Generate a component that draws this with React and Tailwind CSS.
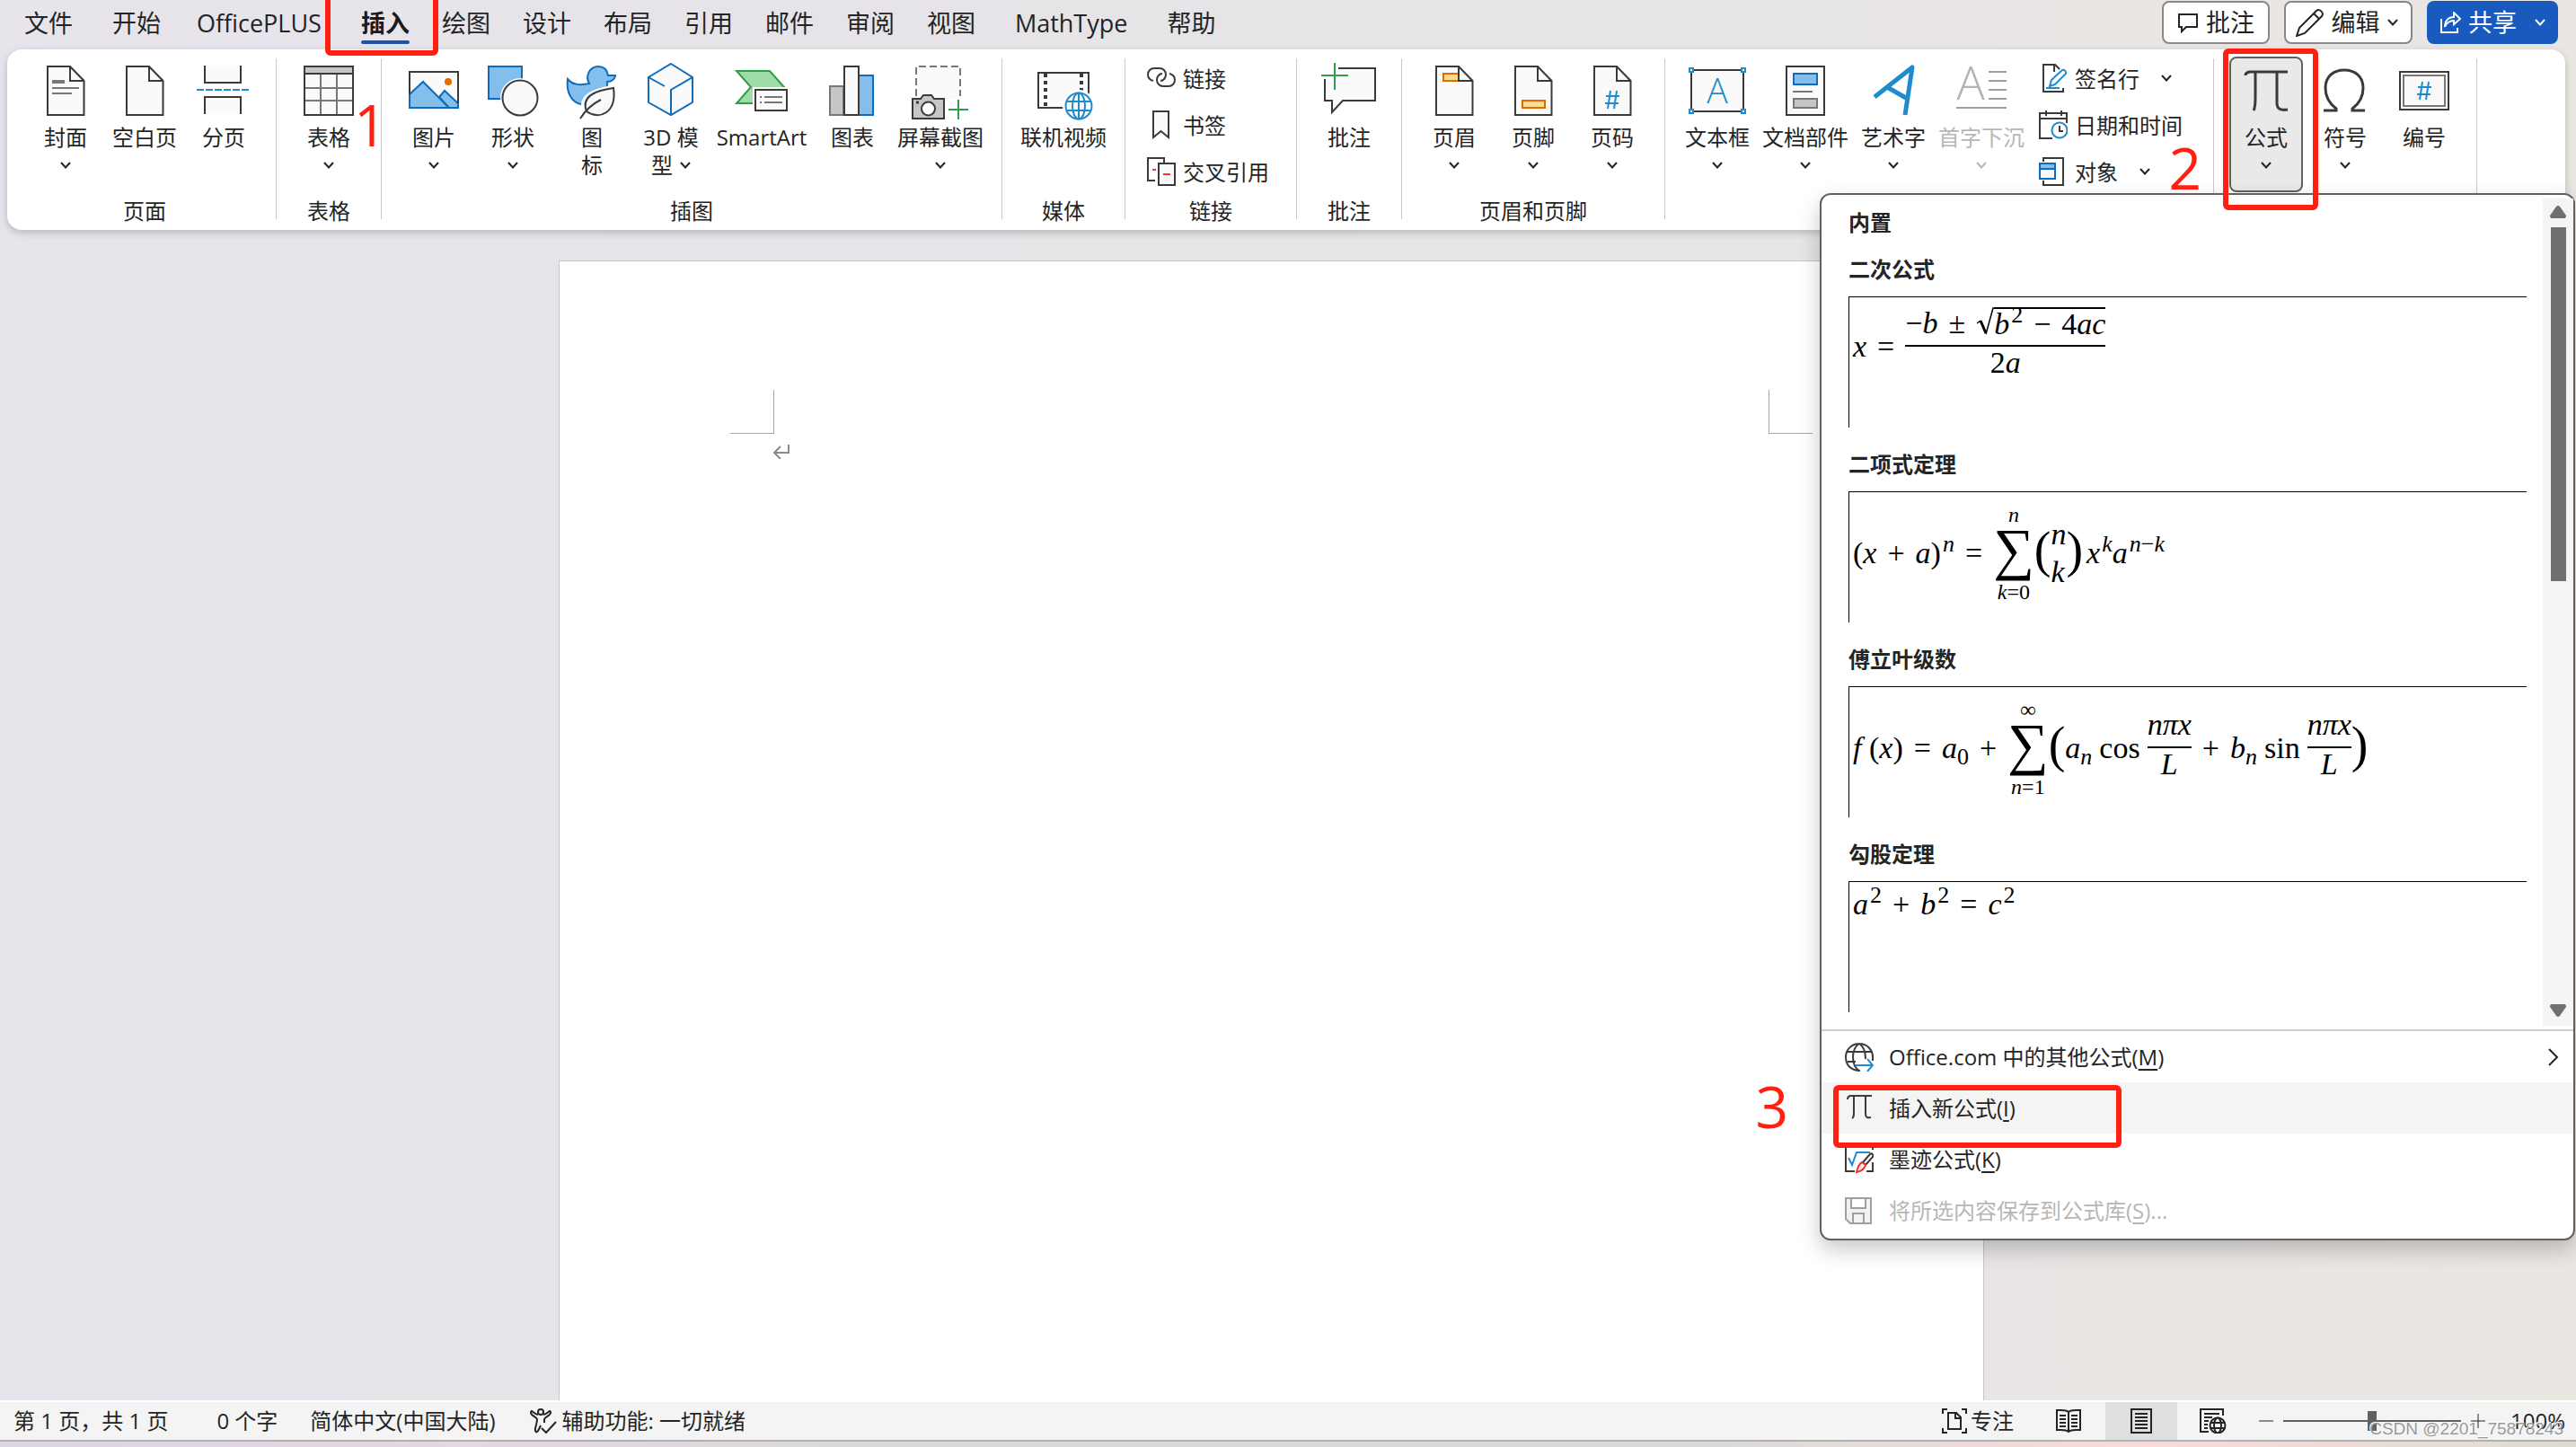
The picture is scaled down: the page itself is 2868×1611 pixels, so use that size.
import React from "react";

const DARK = "#3b3a39";
const BLUE = "#1e8bcd";
const DEEP = "#0f6cbd";
const SKY = "#83beec";
const GREEN = "#2f9e4f";

function Icon({ children }) {
  return (
    <svg aria-hidden="true" className="h-16 w-16 shrink-0 overflow-visible" viewBox="0 0 64 64" fill="none" stroke={DARK} strokeWidth="2">
      {children}
    </svg>
  );
}

function SmallIcon({ children }) {
  return (
    <svg aria-hidden="true" className="h-8 w-8 shrink-0" viewBox="0 0 32 32" fill="none" stroke={DARK} strokeWidth="2">
      {children}
    </svg>
  );
}

function Chevron({ className = "" }) {
  return (
    <svg aria-hidden="true" className={`h-2 w-3 shrink-0 ${className}`} viewBox="0 0 12 8" fill="none" stroke="currentColor" strokeWidth="2">
      <path d="M1 1L6 6.5L11 1" />
    </svg>
  );
}

const Sheet = () => (
  <>
    <path d="M12 4H37L52.5 20V58H12Z" fill="#fafafa" />
    <path d="M37 4V20H52.5" />
  </>
);

const Hash = ({ x, y }) => (
  <path d={`M${x - 2} ${y - 10}L${x - 5} ${y + 10}M${x + 5} ${y - 10}L${x + 2} ${y + 10}M${x - 7} ${y - 4}H${x + 8}M${x - 8} ${y + 4}H${x + 7}`} stroke={BLUE} />
);

const art = {
  cover: (
    <>
      <Sheet />
      <path d="M17 21H31" strokeWidth="4" stroke="#797775" />
      <path d="M17 28H47M17 34H39" stroke="#797775" />
    </>
  ),
  blank: <Sheet />,
  pageBreak: (
    <>
      <path d="M11 3V22H51V3M11 57V38H51V57" fill="#fafafa" />
      <path d="M2 30H60" stroke={BLUE} strokeDasharray="8 2" />
    </>
  ),
  table: (
    <>
      <path d="M5 4H59V58H5Z" fill="#fafafa" />
      <path d="M6 5H58V12H6Z" fill="#c8c6c4" stroke="none" />
      <path d="M5 28H59M5 42H59M23 12V58M41 12V58" stroke="#797775" />
      <path d="M5 4H59V58H5ZM5 12H59" />
    </>
  ),
  picture: (
    <>
      <path d="M5 10H59V50H5Z" fill="#fafafa" />
      <path d="M5 35L20 21L49 50H5Z" fill={SKY} stroke={DEEP} />
      <path d="M38 38L44 31L59 45V50H49Z" fill={SKY} stroke={DEEP} />
      <circle cx="48" cy="21" r="4" fill="#e06c00" stroke="none" />
      <path d="M5 35V10H59V45" />
      <path d="M5 35V50H59V45" stroke={DEEP} />
    </>
  ),
  shapes: (
    <>
      <path d="M5 4H42V40H5Z" fill={SKY} stroke={DEEP} />
      <circle cx="40" cy="39" r="22" fill="#fff" stroke="none" />
      <circle cx="40" cy="39" r="19.5" fill="#fafafa" />
    </>
  ),
  duck: (
    <>
      <path d="M5 18C11 25 19 25 29 23C24 14 30 4 39 4C46 4 49 8 50 14H58C58 18 54 21 49 21C50 26 48 30 46 34C40 46 28 48 20 46C9 44 3 32 5 18Z" fill={SKY} stroke={DEEP} />
      <path d="M55 25C35 28 20 34 20 48L18 62C40 66 60 60 59 40Z" fill="#fff" stroke="none" />
      <path d="M56 28C34 31 20 38 26 54C40 64 60 56 56 28Z" fill="#fafafa" />
      <path d="M42 41C32 46 24 54 19 62" />
    </>
  ),
  cube: (
    <>
      <path d="M32 1L56 16V44L32 58L7 44V16Z" fill="#fafafa" stroke={DEEP} />
      <path d="M56 16L32 30V58M7 16L25 26" stroke={DEEP} />
    </>
  ),
  smart: (
    <>
      <path d="M4 9H41L57 27L50 45H4L20 27Z" fill="#a0dca8" stroke={GREEN} />
      <path d="M22 27H63V56H22Z" fill="#fff" stroke="none" />
      <path d="M25 30H60V53H25Z" fill="#fafafa" />
      <path d="M30 38H32M35 38H55M30 44H32M35 44H55" stroke="#797775" />
    </>
  ),
  chart: (
    <>
      <path d="M7 26H22V58H7Z" fill="#c8c6c4" stroke="#797775" />
      <path d="M39 14H55V58H39Z" fill={SKY} stroke={DEEP} />
      <path d="M23 4H39V58H23Z" fill="#fafafa" />
    </>
  ),
  screenshot: (
    <>
      <path d="M5 4H54V40H5Z" fill="#fafafa" stroke="none" />
      <path d="M5 37V4H54V37" stroke="#797775" strokeDasharray="8 4" />
      <path d="M1 40H10L13 36H22L25 40H36V62H1Z" fill="#c8c6c4" />
      <circle cx="18.500" cy="51" r="7.500" fill="#fff" />
      <path d="M5 44H8" strokeWidth="3" />
      <path d="M52 41V63M41 52H63" stroke={GREEN} />
    </>
  ),
  video: (
    <>
      <path d="M4 11H60V50H4Z" fill="#fafafa" />
      <path d="M12 12V50M52 12V34" strokeWidth="4" strokeDasharray="4 4" />
      <circle cx="49" cy="48" r="18" fill="#fff" stroke="none" />
      <g stroke={BLUE}>
        <circle cx="49" cy="48" r="14.500" fill="#fafafa" />
        <ellipse cx="49" cy="48" rx="7" ry="14.500" />
        <path d="M49 33V63M36 43H62M36 53H62" />
      </g>
    </>
  ),
  comment: (
    <>
      <path d="M20 6H61V42H25L13 55V42H5V18H16V6Z" fill="#fafafa" stroke="none" />
      <path d="M20 6H61V42H25L13 55V42H5V18" />
      <path d="M16 0V30M1 14H31" stroke={GREEN} />
    </>
  ),
  header: (
    <>
      <Sheet />
      <path d="M37 12H20V20H37" fill="#fbdb8f" stroke="#e06c00" />
      <path d="M37 4V20H52.5" />
    </>
  ),
  footer: (
    <>
      <Sheet />
      <path d="M20 42H45V50H20Z" fill="#fbdb8f" stroke="#e06c00" />
    </>
  ),
  pageNumber: (
    <>
      <Sheet />
      <Hash x={32} y={41} />
    </>
  ),
  textBox: (
    <>
      <path d="M3 8H61V54H3Z" fill="#fafafa" />
      <path d="M1 6H5V10H1ZM59 6H63V10H59ZM1 52H5V56H1ZM59 52H63V56H59Z" fill="#fff" stroke={BLUE} />
      <text x="32" y="45" textAnchor="middle" fontFamily="Open Sans" fontSize="39" fontWeight="300" fill={BLUE} stroke="none">A</text>
    </>
  ),
  parts: (
    <>
      <path d="M11 4H53V58H11Z" fill="#fafafa" />
      <path d="M19 12H45V24H19Z" fill={SKY} stroke={DEEP} />
      <path d="M18 32H40" stroke="#797775" />
      <path d="M19 40H45V50H19Z" fill="#c8c6c4" stroke="#797775" />
    </>
  ),
  wordArt: <path d="M11 38L53 5L45 58M25 27L46 39" stroke={BLUE} strokeWidth="5" strokeLinejoin="round" />,
  dropCap: (
    <g stroke="#a19f9d">
      <text x="20" y="41" textAnchor="middle" fontFamily="Open Sans" fontSize="52" fontWeight="300" fill="#b4b2b0" stroke="none">A</text>
      <path d="M40 10H60M40 20H60M40 30H60M40 40H60M4 50H60" />
    </g>
  ),
  pi: <path d="M9 14C9 11 11 10 15 10H56M20 10V38C20 45 20 50 18 53M44 10V44C44 51 47 53 56 52" strokeWidth="3" />,
  omega: <path d="M8 53H22V51C14 45 10 38 10 28C10 15 19 8 31 8C43 8 52 15 52 28C52 38 48 45 40 51V53H54" strokeWidth="3" />,
  numbering: (
    <>
      <path d="M5 10H59V52H5Z" fill="#fff" />
      <path d="M9 14H55V48H9Z" fill="#fafafa" stroke="#797775" />
      <Hash x={32} y={31} />
    </>
  ),
};

const smallArt = {
  link: <path d="M7 19C3 18 1 15 1 12C1 8 4 5 8 5H14C18 5 21 8 21 12C21 16 18 19 15 19M25 11C29 12 31 15 31 18C31 22 28 25 24 25H18C14 25 11 22 11 18C11 14 14 11 17 11" />,
  bookmark: <path d="M7 1H24V30L15.5 23L7 30Z" fill="#fafafa" />,
  crossRef: (
    <>
      <path d="M9 26H1V1H19V6" />
      <path d="M13 7H31V31H13Z" fill="#fafafa" />
      <path d="M6 14H10M18 19H26" stroke="#e8393d" />
    </>
  ),
  signature: (
    <>
      <path d="M27 27V31H5V1H18L23 6M17 1V9" />
      <path d="M12 25L14 18L26 7C28 6 31 9 30 11L18 23Z" fill="#fafafa" stroke={BLUE} />
      <path d="M8 27H23" stroke={BLUE} />
    </>
  ),
  date: (
    <>
      <path d="M15 31H1V3H31V14M1 9H31M8 0V6M25 0V6" />
      <circle cx="23" cy="22" r="8.500" fill="#fff" stroke={BLUE} />
      <path d="M23 17V23H27" />
    </>
  ),
  object: (
    <>
      <path d="M5 5V1H27V31H5V26" />
      <path d="M1 7H18V24H1Z" fill="#fafafa" stroke={DEEP} />
      <path d="M2 10H17" stroke={SKY} strokeWidth="4" />
      <path d="M1 13H18" stroke={DEEP} />
    </>
  ),
  globe: (
    <>
      <path d="M17 31C6 31 1 24 1 16C1 7 8 1 16 1C25 1 31 8 31 16V20M16 31C11 28 9 22 9 16C9 9 11 4 16 1C21 4 23 9 23 18M3 10H29M3 21H12" />
      <path d="M12 25H31M25 18L31 25L25 32" stroke={BLUE} />
    </>
  ),
  pi: <path d="M3 6C3 3 4 2 7 2H30M10 2V20C10 24 10 26 8 27M23 2V22C23 26 25 27 29 26" />,
  ink: (
    <>
      <path d="M1 1V29H11M24 29H31V19M31 5V1" />
      <path d="M4 14L8 22L13 8H28" stroke={BLUE} />
      <path d="M20 19L28 10C30 8 32 11 31 13L23 22Z" fill="#fff" />
      <path d="M13 30C14 26 15 21 19 19L23 22C22 27 18 29 13 30Z" fill="#fde3e3" stroke="#e8393d" />
    </>
  ),
  save: <path d="M1 2H29V30H6L1 25ZM7 2V13H23V2M9 30V19H21V30" stroke="#a19f9d" fill="#f3f2f1" />,
};

function RibbonButton({ icon, label, second, chevron, width = "w-[88px]", disabled }) {
  return (
    <button type="button" disabled={disabled} className={`mt-2 flex ${width} shrink-0 flex-col items-center pt-[7px] whitespace-nowrap ${disabled ? "text-[#b8b6b4]" : ""}`}>
      <Icon>{art[icon]}</Icon>
      <span className="mt-[3px] leading-[31px]">{label}</span>
      {(second || chevron) && (
        <span className="flex h-[31px] items-center gap-2 leading-[31px]">
          {second}
          {chevron && <Chevron />}
        </span>
      )}
    </button>
  );
}

function SmallButton({ icon, label, chevron }) {
  return (
    <button type="button" className="flex h-[52px] items-center gap-2 whitespace-nowrap">
      <SmallIcon>{smallArt[icon]}</SmallIcon>
      <span className="leading-[31px]">{label}</span>
      {chevron && <Chevron className="ml-4" />}
    </button>
  );
}

function Group({ caption, children, width = "" }) {
  return (
    <section className={`flex shrink-0 flex-col ${width}`}>
      <div className="flex flex-1 px-3.5">{children}</div>
      <div className="h-[31px] text-center leading-[31px]">{caption}</div>
    </section>
  );
}

const Divider = () => <div className="mt-2.5 mb-1.5 w-px shrink-0 bg-[#c8c8c8]" />;

function FormulaButton() {
  return (
    <div className="relative mx-[3px] mt-2 h-[151px] w-[82px] shrink-0">
      <button type="button" aria-expanded="true" className="flex h-full w-full flex-col items-center rounded-lg border-2 border-[#616161] bg-[#e9e9e9] pt-[5px]">
        <Icon>{art.pi}</Icon>
        <span className="mt-[3px] leading-[31px]">公式</span>
        <span className="flex h-[31px] items-center"><Chevron /></span>
      </button>
      <div className="pointer-events-none absolute -top-[9px] -right-[17px] -bottom-[20px] -left-[7px] z-20 rounded-md border-6 border-[#ff2012]" />
    </div>
  );
}

const tabs = [
  { name: "文件" },
  { name: "开始", space: "ml-2" },
  { name: "OfficePLUS", space: "mx-1" },
  { name: "插入", space: "ml-1", active: true },
  { name: "绘图" },
  { name: "设计" },
  { name: "布局" },
  { name: "引用" },
  { name: "邮件" },
  { name: "审阅" },
  { name: "视图" },
  { name: "MathType", space: "mx-2" },
  { name: "帮助" },
];

function TabBar() {
  return (
    <header className="flex h-[55px] items-start justify-between pr-5 pl-[27px] text-[27px]">
      <nav className="flex h-[52px] items-center gap-9 whitespace-nowrap">
        {tabs.map((t) =>
          t.active ? (
            <button key={t.name} type="button" className={`relative h-full font-bold text-[#1b1b1b] ${t.space}`}>
              {t.name}
              <span className="absolute inset-x-0 bottom-[3px] h-1 rounded-full bg-[#1d52ad]" />
              <span className="pointer-events-none absolute -top-3 -right-8 -bottom-2.5 -left-10 z-20 rounded-md border-6 border-[#ff2012]" />
            </button>
          ) : (
            <button key={t.name} type="button" className={t.space}>{t.name}</button>
          )
        )}
      </nav>
      <div className="mt-px flex gap-4 whitespace-nowrap">
        <button type="button" className="flex h-12 w-[120px] items-center justify-center gap-2 rounded-lg border-2 border-[#8a8886] bg-white">
          <svg aria-hidden="true" className="h-6 w-6" viewBox="0 0 24 24" fill="none" stroke="#242424" strokeWidth="2"><path d="M2 3H22V17H10L5 22V17H2Z" /></svg>
          批注
        </button>
        <button type="button" className="flex h-12 w-[143px] items-center justify-center gap-2 rounded-lg border-2 border-[#8a8886] bg-white">
          <svg aria-hidden="true" className="-ml-1 h-8 w-8" viewBox="0 0 32 32" fill="none" stroke="#242424" strokeWidth="2"><path d="M1 31L4 22L23 3C26 0 32 5 29 9L10 28ZM20 6L26 12" /></svg>
          编辑
          <Chevron />
        </button>
        <button type="button" className="flex h-12 w-[146px] items-center justify-center gap-2 rounded-lg bg-[#185abd] text-white">
          <svg aria-hidden="true" className="h-6 w-6" viewBox="0 0 24 24" fill="none" stroke="currentColor" strokeWidth="2"><path d="M2 8V23H20V18M16 1L23 8L16 14V10C11 10 8 12 6 17C6 10 10 6 16 6Z" /></svg>
          共享
          <Chevron className="ml-3" />
        </button>
      </div>
    </header>
  );
}

function Ribbon() {
  return (
    <div className="mr-3 ml-2 flex h-[201px] rounded-2xl bg-white pb-1.5 pl-[7px] shadow-[0_3px_8px_rgba(0,0,0,0.2)]">
      <Group caption="页面">
        <RibbonButton icon="cover" label="封面" chevron />
        <RibbonButton icon="blank" label="空白页" />
        <RibbonButton icon="pageBreak" label="分页" />
      </Group>
      <Divider />
      <Group caption="表格">
        <RibbonButton icon="table" label="表格" chevron />
      </Group>
      <Divider />
      <Group caption="插图">
        <RibbonButton icon="picture" label="图片" chevron />
        <RibbonButton icon="shapes" label="形状" chevron />
        <RibbonButton icon="duck" label="图" second="标" />
        <RibbonButton icon="cube" label="3D 模" second="型" chevron />
        <RibbonButton icon="smart" label="SmartArt" width="w-[114px]" />
        <RibbonButton icon="chart" label="图表" />
        <RibbonButton icon="screenshot" label="屏幕截图" width="w-[108px]" chevron />
      </Group>
      <Divider />
      <Group caption="媒体">
        <RibbonButton icon="video" label="联机视频" width="w-[108px]" />
      </Group>
      <Divider />
      <Group caption="链接" width="w-[190px]">
        <div className="ml-2.5 flex flex-col pt-1.5">
          <SmallButton icon="link" label="链接" />
          <SmallButton icon="bookmark" label="书签" />
          <SmallButton icon="crossRef" label="交叉引用" />
        </div>
      </Group>
      <Divider />
      <Group caption="批注">
        <RibbonButton icon="comment" label="批注" />
      </Group>
      <Divider />
      <Group caption="页眉和页脚">
        <RibbonButton icon="header" label="页眉" chevron />
        <RibbonButton icon="footer" label="页脚" chevron />
        <RibbonButton icon="pageNumber" label="页码" chevron />
      </Group>
      <Divider />
      <Group width="w-[610px]">
        <RibbonButton icon="textBox" label="文本框" chevron />
        <RibbonButton icon="parts" label="文档部件" width="w-[108px]" chevron />
        <RibbonButton icon="wordArt" label="艺术字" chevron />
        <RibbonButton icon="dropCap" label="首字下沉" width="w-[108px]" chevron disabled />
        <div className="ml-2.5 flex flex-col pt-1.5">
          <SmallButton icon="signature" label="签名行" chevron />
          <SmallButton icon="date" label="日期和时间" />
          <SmallButton icon="object" label="对象" chevron />
        </div>
      </Group>
      <Divider />
      <Group>
        <FormulaButton />
        <RibbonButton icon="omega" label="符号" chevron />
        <RibbonButton icon="numbering" label="编号" />
      </Group>
      <Divider />
    </div>
  );
}

const Op = ({ children }) => <span className="px-3 not-italic">{children}</span>;
const Up = ({ children }) => <span className="not-italic">{children}</span>;
const Sup = ({ children }) => <sup className="ml-0.5 text-[26px]">{children}</sup>;
const Sub = ({ children }) => <sub className="text-[26px]">{children}</sub>;

function Frac({ top, bottom }) {
  return (
    <span className="flex shrink-0 flex-col items-center">
      <span className="flex h-[46px] items-end border-b-2 border-black pb-1.5">{top}</span>
      <span className="h-[46px]">{bottom}</span>
    </span>
  );
}

function Sum({ from, to }) {
  return (
    <span className="flex flex-col items-center text-2xl leading-6">
      <span className="h-6">{to}</span>
      <span className="h-[62px] text-[64px] leading-[54px] not-italic">∑</span>
      <span className="h-6">{from}</span>
    </span>
  );
}

const Paren = ({ children }) => <span className="-mt-2 text-[56px] leading-[62px] not-italic">{children}</span>;

function Root({ children }) {
  return (
    <span className="flex">
      <svg aria-hidden="true" className="h-9 w-5" viewBox="0 0 20 36" fill="none" stroke="#000">
        <path d="M1 18L5 15" strokeWidth="1.500" />
        <path d="M5 15L11 29" strokeWidth="3" />
        <path d="M11 30L19 1H20" strokeWidth="1.500" />
      </svg>
      <span className="border-t-2 border-black leading-[34px]">{children}</span>
    </span>
  );
}

const formulas = [
  {
    name: "二次公式",
    pad: "pt-[9px]",
    body: (
      <>
        <span>x</span>
        <Op>=</Op>
        <Frac
          top={<><Up>−</Up>b<Op>±</Op><Root>b<Sup><Up>2</Up></Sup><Op>−</Op><Up>4</Up>ac</Root></>}
          bottom={<><Up>2</Up>a</>}
        />
      </>
    ),
  },
  {
    name: "二项式定理",
    pad: "pt-[13px]",
    body: (
      <>
        <span><Up>(</Up>x<Op>+</Op>a<Up>)</Up><Sup>n</Sup></span>
        <Op>=</Op>
        <Sum to="n" from={<>k<Up>=0</Up></>} />
        <Paren>(</Paren>
        <span className="flex flex-col gap-1.5"><span>n</span><span>k</span></span>
        <Paren>)</Paren>
        <span className="ml-1">x<Sup>k</Sup>a<Sup>n<Up>−</Up>k</Sup></span>
      </>
    ),
  },
  {
    name: "傅立叶级数",
    pad: "pt-[13px]",
    body: (
      <>
        <span>f<Up> (</Up>x<Up>)</Up></span>
        <Op>=</Op>
        <span>a<Sub><Up>0</Up></Sub></span>
        <Op>+</Op>
        <Sum to="∞" from={<>n<Up>=1</Up></>} />
        <Paren>(</Paren>
        <span>a<Sub>n</Sub></span>
        <span className="mx-2 not-italic">cos</span>
        <Frac top="nπx" bottom="L" />
        <Op>+</Op>
        <span>b<Sub>n</Sub></span>
        <span className="mx-2 not-italic">sin</span>
        <Frac top="nπx" bottom="L" />
        <Paren>)</Paren>
      </>
    ),
  },
  {
    name: "勾股定理",
    pad: "pt-[7px]",
    body: (
      <span>
        a<Sup><Up>2</Up></Sup><Op>+</Op>b<Sup><Up>2</Up></Sup><Op>=</Op>c<Sup><Up>2</Up></Sup>
      </span>
    ),
  },
];

const actions = [
  { icon: "globe", text: "Office.com 中的其他公式", accel: "M", more: true },
  { icon: "pi", text: "插入新公式", accel: "I", active: true },
  { icon: "ink", text: "墨迹公式", accel: "K" },
  { icon: "save", text: "将所选内容保存到公式库", accel: "S", tail: "...", disabled: true },
];

function FormulaMenu() {
  return (
    <div className="absolute top-[215px] right-px z-10 w-[841px] rounded-xl border-2 border-[#616161] bg-white pb-[3px] shadow-[0_10px_24px_rgba(0,0,0,0.22)]">
      <div className="flex border-b-2 border-[#d1d1d1]">
        <div className="flex-1 pl-[30px]">
          <h2 className="mt-[15px] leading-8 font-bold">内置</h2>
          {formulas.map((f) => (
            <button key={f.name} type="button" className="mt-5 block w-[755px] pb-[5px] text-left">
              <span className="block leading-8 font-bold">{f.name}</span>
              <span className={`mt-3.5 flex h-[146px] items-start border-t border-l border-black pl-1 font-['Liberation_Serif',serif] text-[34px] leading-9 whitespace-nowrap text-black italic ${f.pad}`}>
                <span className="flex items-center">{f.body}</span>
              </span>
            </button>
          ))}
          <div className="h-3.5" />
        </div>
        <div className="my-1 flex w-[34px] flex-col items-center justify-between bg-[#f4f4f4] pt-2 pb-2.5">
          <svg aria-hidden="true" className="h-[14px] w-[18px]" viewBox="0 0 18 14" fill="#707070"><path d="M7 1Q9 -1 11 1L18 11Q18 14 16 14H2Q0 14 0 11Z" /></svg>
          <div className="mt-2.5 h-[394px] w-[17px] bg-[#707070]" />
          <div className="flex-1" />
          <svg aria-hidden="true" className="h-[14px] w-[18px]" viewBox="0 0 18 14" fill="#707070"><path d="M7 13Q9 15 11 13L18 3Q18 0 16 0H2Q0 0 0 3Z" /></svg>
        </div>
      </div>
      <div>
        {actions.map((a) => (
          <div key={a.text} className="relative">
            <button type="button" disabled={a.disabled} className={`flex h-[57px] w-full items-center pr-4 pl-[26px] ${a.active ? "bg-[#f4f4f4]" : ""} ${a.disabled ? "text-[#b8b6b4]" : ""}`}>
              <SmallIcon>{smallArt[a.icon]}</SmallIcon>
              <span className="ml-[17px]">
                {a.text}(<span className="underline underline-offset-4">{a.accel}</span>){a.tail}
              </span>
              {a.more && (
                <svg aria-hidden="true" className="ml-auto h-5 w-3" viewBox="0 0 12 20" fill="none" stroke="#242424" strokeWidth="2"><path d="M1 1L10 10L1 19" /></svg>
              )}
            </button>
            {a.active && <div className="pointer-events-none absolute top-[3px] left-[13px] z-20 h-[70px] w-[321px] rounded-md border-6 border-[#ff2012]" />}
          </div>
        ))}
      </div>
    </div>
  );
}

function Document() {
  return (
    <main className="mt-[34px] flex flex-1 justify-center pr-[38px]">
      <article className="flex w-[1587px] items-start justify-between border-x border-t border-[#c6c6c6] bg-white px-[190px] pt-[143px]">
        <div>
          <div className="h-[49px] w-[49px] border-r border-b border-[#a6a6a6]" />
          <svg aria-hidden="true" className="mt-3 ml-12 h-4 w-[18px]" viewBox="0 0 18 16" fill="none" stroke="#8a8a8a" strokeWidth="2"><path d="M17 0V9H2M8 2L1 9L8 16" /></svg>
        </div>
        <div className="h-[49px] w-[49px] border-b border-l border-[#a6a6a6]" />
      </article>
    </main>
  );
}

function StatusBar() {
  return (
    <footer className="relative flex h-[46px] items-center border-t-2 border-b-2 border-t-white border-b-[#b3b0b3] bg-[#f4f4f4] pr-3 pl-[15px] whitespace-nowrap">
      <span>第 1 页，共 1 页</span>
      <span className="ml-[54px]">0 个字</span>
      <span className="ml-9">简体中文(中国大陆)</span>
      <button type="button" className="ml-[38px] flex items-center gap-1.5">
        <svg aria-hidden="true" className="h-7 w-[30px]" viewBox="0 0 30 28" fill="none" stroke="#242424" strokeWidth="2">
          <circle cx="12" cy="4" r="3" />
          <path d="M9 7C4 6 2 1 1 4C0 8 7 9 8 12C8 18 5 22 6 25C7 28 9 26 12 19M15 7C20 6 22 1 23 4C24 8 17 9 16 12V16M13 22L18 27L29 15" />
        </svg>
        辅助功能: 一切就绪
      </button>
      <div className="ml-auto flex h-full items-center">
        <button type="button" className="mr-[47px] flex items-center gap-1">
          <svg aria-hidden="true" className="h-7 w-7" viewBox="0 0 28 28" fill="none" stroke="#242424" strokeWidth="2">
            <path d="M1 6V1H6M22 1H27V6M1 22V27H6M22 27H27V22M7 5H16L21 10V23H7ZM15 5V11H21" />
          </svg>
          专注
        </button>
        <button type="button" aria-label="阅读视图" className="mr-[27px]">
          <svg aria-hidden="true" className="h-7 w-7" viewBox="0 0 28 28" fill="none" stroke="#242424" strokeWidth="2">
            <path d="M14 4C11 1 6 2 1 2V24C6 24 11 23 14 26C17 23 22 24 27 24V2C22 2 17 1 14 4V26M4 8H11M4 12H11M4 16H11M4 20H11M17 8H24M17 12H24M17 16H24M17 20H24" />
          </svg>
        </button>
        <button type="button" aria-label="页面视图" className="mr-[25px] flex h-full w-20 items-center justify-center bg-[#dfdfdf]">
          <svg aria-hidden="true" className="h-7 w-6" viewBox="0 0 24 28" fill="none" stroke="#242424" strokeWidth="2">
            <path d="M1 1H23V27H1ZM5 6H19M5 10H19M5 14H19M5 18H19M5 22H19" />
          </svg>
        </button>
        <button type="button" aria-label="Web 版式" className="mr-9">
          <svg aria-hidden="true" className="h-7 w-[30px]" viewBox="0 0 30 28" fill="none" stroke="#242424" strokeWidth="2">
            <path d="M10 26H1V1H26V8M5 6H22M5 10H14M5 14H10M5 18H9M5 22H9" />
            <circle cx="20" cy="19" r="8.500" />
            <ellipse cx="20" cy="19" rx="4" ry="8.500" />
            <path d="M12 16H28M12 22H28" />
          </svg>
        </button>
        <button type="button" aria-label="缩小" className="h-4 w-4">
          <svg aria-hidden="true" viewBox="0 0 16 16" stroke="#242424" strokeWidth="1"><path d="M0 8H16" /></svg>
        </button>
        <input
          type="range"
          aria-label="缩放"
          min="0"
          max="100"
          defaultValue="50"
          className="mx-[11px] h-6 w-[198px] appearance-none bg-transparent [&::-webkit-slider-runnable-track]:h-0.5 [&::-webkit-slider-runnable-track]:bg-[#616161] [&::-webkit-slider-thumb]:-mt-2.5 [&::-webkit-slider-thumb]:h-[22px] [&::-webkit-slider-thumb]:w-2.5 [&::-webkit-slider-thumb]:appearance-none [&::-webkit-slider-thumb]:bg-[#616161]"
        />
        <button type="button" aria-label="放大" className="mr-7 h-4 w-4">
          <svg aria-hidden="true" viewBox="0 0 16 16" stroke="#242424" strokeWidth="1"><path d="M0 8H16M8 0V16" /></svg>
        </button>
        <span>100%</span>
      </div>
      <span className="absolute right-[14px] -bottom-1 font-['Liberation_Sans',sans-serif] text-[19px] leading-8 text-[#999] [text-shadow:-1px_-1px_0_#fff]">CSDN @2201_75878243</span>
    </footer>
  );
}

export default function App() {
  return (
    <div className="relative flex min-h-screen flex-col overflow-hidden bg-linear-to-r from-[#e7e4eb] via-[#e6e4e7] to-[#eae6e2] font-['Open_Sans','Noto_Sans_CJK_SC',sans-serif] text-2xl text-[#242424]">
      <TabBar />
      <Ribbon />
      <Document />
      <StatusBar />
      <div className="flex h-1.5">
        <div className="flex-1 bg-linear-to-r from-[#ddd5e8] via-[#e8d5e4] to-[#dadada]" />
        <div className="flex-1 bg-[#dadada]" />
        <div className="flex-1 bg-linear-to-r from-[#dadada] via-[#fadbd4] to-[#dedccd]" />
      </div>
      <FormulaMenu />
      <span className="absolute top-[107px] left-[394px] z-20 text-[64px] leading-16 text-[#ff2012]">1</span>
      <span className="absolute top-[155px] right-[417px] z-20 text-[64px] leading-16 text-[#ff2012]">2</span>
      <span className="absolute top-[1200px] right-[877px] z-20 text-[64px] leading-16 text-[#ff2012]">3</span>
    </div>
  );
}
